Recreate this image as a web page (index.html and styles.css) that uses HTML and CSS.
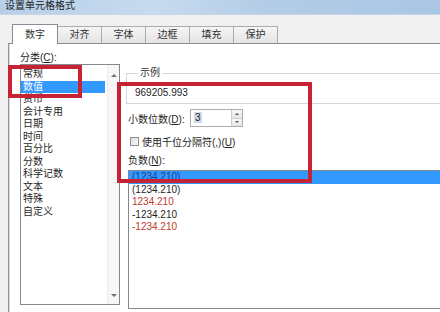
FILE: index.html
```html
<!DOCTYPE html>
<html lang="zh-CN">
<head>
    <meta charset="UTF-8">
    <title>设置单元格格式</title>
    <link rel="stylesheet" href="styles.css">
</head>
<body>
    <div class="titlebar">设置单元格格式</div>
    <div class="dialog">
        <div class="tabs">
            <div class="tab active">数字</div>
            <div class="tab">对齐</div>
            <div class="tab">字体</div>
            <div class="tab">边框</div>
            <div class="tab">填充</div>
            <div class="tab">保护</div>
        </div>
        <div class="panel">
            <div class="col-left">
                <div class="label">分类(<u>C</u>):</div>
                <div class="listbox category">
                    <ul class="items">
                        <li>常规</li>
                        <li class="selected">数值</li>
                        <li>货币</li>
                        <li>会计专用</li>
                        <li>日期</li>
                        <li>时间</li>
                        <li>百分比</li>
                        <li>分数</li>
                        <li>科学记数</li>
                        <li>文本</li>
                        <li>特殊</li>
                        <li>自定义</li>
                    </ul>
                    <div class="scrollbar">
                        <span class="arrow up"></span>
                        <span class="arrow down"></span>
                    </div>
                </div>
            </div>
            <div class="col-right">
                <fieldset class="sample">
                    <legend>示例</legend>
                    <div class="sample-value">969205.993</div>
                </fieldset>
                <div class="row decimals">
                    <span class="row-label">小数位数(<u>D</u>):</span>
                    <div class="spinner">
                        <span class="spin-value"><span class="sel">3</span></span>
                        <span class="spin-buttons">
                            <span class="spin-btn"><span class="arrow up"></span></span>
                            <span class="spin-btn"><span class="arrow down"></span></span>
                        </span>
                    </div>
                </div>
                <div class="row thousands">
                    <span class="checkbox"></span>
                    <span>使用千位分隔符(,)(<u>U</u>)</span>
                </div>
                <div class="label neg-label">负数(<u>N</u>):</div>
                <ul class="listbox negatives">
                    <li class="selected">(1234.210)</li>
                    <li>(1234.210)</li>
                    <li class="red">1234.210</li>
                    <li>-1234.210</li>
                    <li class="red">-1234.210</li>
                </ul>
            </div>
        </div>
    </div>

    <!-- 红色标注框 -->
    <div class="mark mark-category"></div>
    <div class="mark mark-options"></div>
</body>
</html>
```

FILE: styles.css
```css
body {
    margin: 0;
    width: 440px;
    height: 312px;
    overflow: hidden;
    position: relative;
    background: #f0f0f0;
    font-family: "Liberation Sans", "Noto Sans CJK SC", sans-serif;
    font-size: 10px;
    color: #1e1e1e;
}
u {
    text-decoration: underline;
    text-underline-offset: 1px;
}
.titlebar {
    height: 15px;
    line-height: 12px;
    padding-left: 5px;
    background: linear-gradient(90deg, #b7cfe8 0%, #c6dbef 35%, #b4cde7 60%, #a9c6e4 100%);
    border-bottom: 1px solid #c9d6e3;
    box-sizing: border-box;
    color: #222;
}
.dialog {
    display: flex;
    flex-direction: column;
    height: 297px;
    padding-top: 9px;
    box-sizing: border-box;
}
.tabs {
    display: flex;
    align-items: flex-end;
    height: 19px;
    padding-left: 12px;
    position: relative;
    z-index: 2;
}
.tab {
    width: 44px;
    height: 17px;
    line-height: 16px;
    text-align: center;
    box-sizing: border-box;
    border: 1px solid #acacac;
    border-bottom: none;
    border-left: none;
    background: linear-gradient(#f5f5f5, #e4e4e4);
    color: #333;
}
.tab.active {
    width: 46px;
    height: 20px;
    line-height: 20px;
    margin-bottom: -1px;
    border: 1px solid #898c95;
    border-bottom: none;
    background: #fff;
}
.panel {
    flex: 1;
    display: flex;
    margin-left: 8px;
    padding: 7px 0 0 11px;
    background: #fff;
    border-top: 1px solid #898c95;
    border-left: 1px solid #8a96a6;
    box-shadow: inset 1px 0 0 #d4dbe3;
}
.label {
    line-height: 13px;
}
.col-left {
    width: 100px;
    flex-shrink: 0;
}
.listbox {
    border: 1px solid #828790;
    box-sizing: border-box;
    background: #fff;
    margin: 0;
    padding: 0;
    list-style: none;
}
.category {
    display: flex;
    height: 241px;
}
.items {
    flex: 1;
    margin: 0 2px 0 0;
    padding: 3px 0 0;
    list-style: none;
}
.items li {
    height: 12.5px;
    line-height: 12.5px;
    padding-left: 2px;
}
.items li.selected {
    background: #3399ff;
    color: #fff;
}
.scrollbar {
    width: 12px;
    background: #f7f7f7;
    border-left: 1px solid #ececec;
    display: flex;
    flex-direction: column;
    justify-content: space-between;
    align-items: center;
    padding: 9px 0 7px;
    box-sizing: border-box;
}
.arrow {
    width: 0;
    height: 0;
    border-left: 3px solid transparent;
    border-right: 3px solid transparent;
}
.arrow.up {
    border-bottom: 3px solid #707070;
}
.arrow.down {
    border-top: 3px solid #707070;
}
.col-right {
    width: 330px;
    margin-left: 6px;
    flex-shrink: 0;
}
.sample {
    margin: 16px 0 0;
    padding: 8px 0 4px 8px;
    border: 1px solid #d5d5d5;
    border-right: none;
    min-width: 0;
}
.sample legend {
    margin-left: 3px;
    padding: 0 2px;
    line-height: 12px;
    color: #333;
}
.sample-value {
    line-height: 12px;
}
.row {
    display: flex;
    align-items: center;
    margin-left: 2px;
}
.decimals {
    height: 18px;
    margin-top: 5px;
}
.row-label {
    width: 62px;
}
.spinner {
    display: flex;
    width: 53px;
    height: 18px;
    border: 1px solid #abadb3;
    box-sizing: border-box;
    background: #fff;
}
.spin-value {
    flex: 1;
    padding-left: 3px;
    line-height: 16px;
}
.spin-value .sel {
    padding: 0 1px;
    background: #cfdbea;
}
.spin-buttons {
    display: flex;
    flex-direction: column;
    width: 10px;
    border-left: 1px solid #d0d0d0;
}
.spin-btn {
    flex: 1;
    display: flex;
    align-items: center;
    justify-content: center;
    background: linear-gradient(#f6f6f6, #e6e6e6);
    border-bottom: 1px solid #d0d0d0;
}
.spin-btn:last-child {
    border-bottom: none;
}
.spin-btn .arrow {
    border-left-width: 2px;
    border-right-width: 2px;
}
.spin-btn .arrow.up {
    border-bottom: 2px solid #555;
}
.spin-btn .arrow.down {
    border-top: 2px solid #555;
}
.thousands {
    height: 16px;
    margin-top: 6px;
    gap: 3px;
}
.checkbox {
    width: 9px;
    height: 9px;
    margin-left: 2px;
    border: 1px solid #8f8f8f;
    box-sizing: border-box;
    background: linear-gradient(135deg, #dcdcdc, #f8f8f8);
}
.neg-label {
    margin: 6px 0 0 2px;
    line-height: 12px;
}
.negatives {
    margin: 3px 0 0 2px;
    padding-top: 0;
    height: 139px;
}
.negatives li {
    height: 12.5px;
    line-height: 12.5px;
    padding-left: 3px;
}
.negatives li.selected {
    background: #3399ff;
    color: #1d3b8a;
}
.negatives li.red {
    color: #c0392f;
}
.mark {
    position: absolute;
    border: 4px solid #c62434;
    box-sizing: border-box;
    pointer-events: none;
}
.mark-category {
    left: 8px;
    top: 65px;
    width: 74px;
    height: 33px;
}
.mark-options {
    left: 117px;
    top: 82px;
    width: 195px;
    height: 101px;
}
```
